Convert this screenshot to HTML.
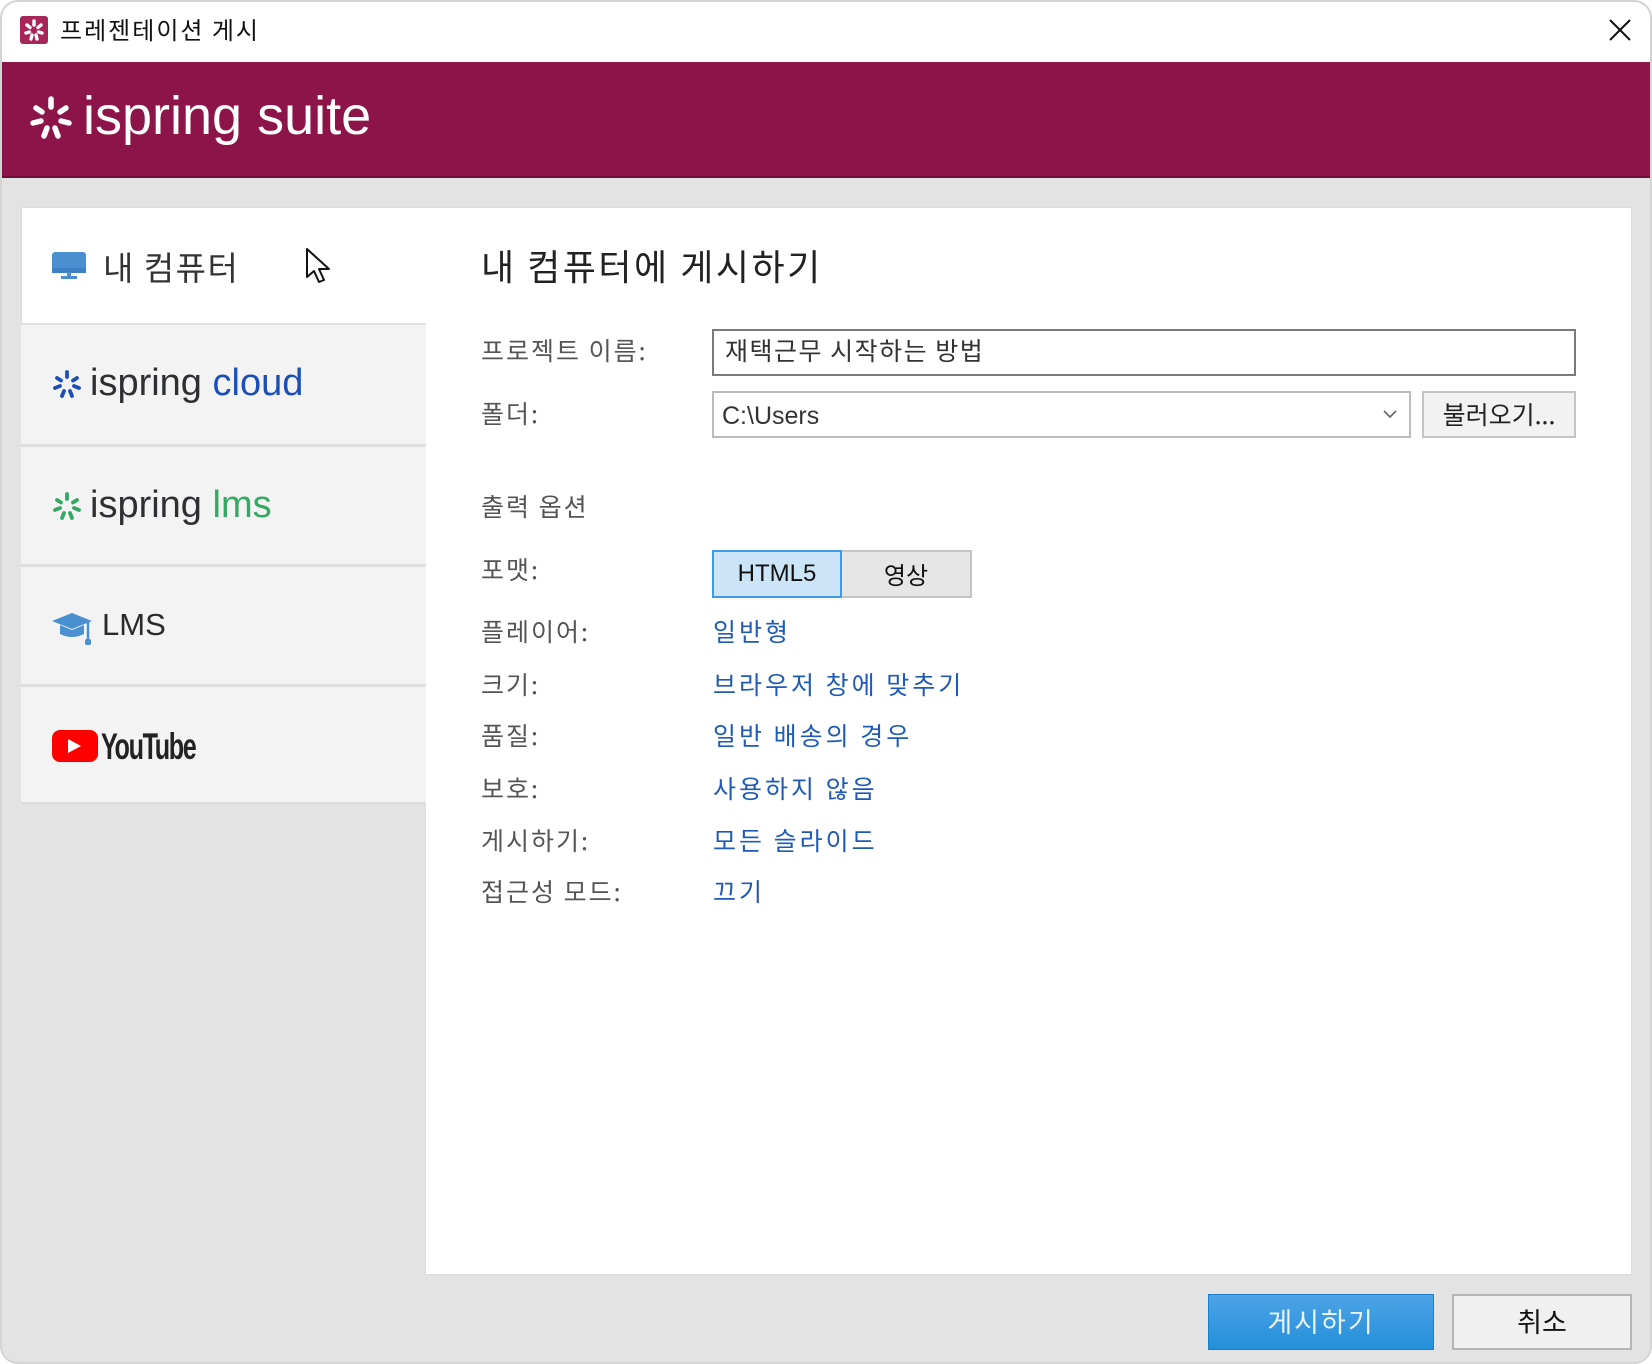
<!DOCTYPE html>
<html><head><meta charset="utf-8"><style>
*{margin:0;padding:0;box-sizing:border-box}
body{width:1652px;height:1364px;background:#fff;font-family:"Liberation Sans","Noto Sans CJK KR",sans-serif;position:relative;overflow:hidden}
.a{position:absolute}
.win{left:0;top:0;width:1652px;height:1364px;background:#e3e3e3;border-radius:18px;overflow:hidden}
.k{font-family:"Noto Sans CJK KR","Liberation Sans",sans-serif}
.lbl{left:481px;font-size:25px;color:#555;line-height:30px;letter-spacing:2px}
.val{left:713px;font-size:25px;color:#1f5bb5;line-height:30px;letter-spacing:3px}
.side{left:21px;width:405px;background:#f3f3f3;border-bottom:3px solid #dedede}
</style></head><body>
<div class="a win">
 <div class="a" style="left:0;top:0;width:1652px;height:62px;background:#fff"></div>
 <div class="a" style="left:20px;top:16px;width:28px;height:28px;background:#a8255a;border-radius:3px"></div>
 <svg class="a" style="left:20px;top:16px" width="28" height="28" viewBox="-14 -14 28 28"><g stroke="#fff" stroke-width="3.4" stroke-linecap="round"><line x1="0" y1="-9" x2="0" y2="-5"/><line x1="7" y1="-5" x2="4" y2="-2.5"/><line x1="8" y1="3" x2="4.5" y2="2"/><line x1="3" y1="9" x2="2" y2="5"/><line x1="-3" y1="9" x2="-2" y2="5"/><line x1="-8" y1="3" x2="-4.5" y2="2"/><line x1="-7" y1="-5" x2="-4" y2="-2.5"/></g></svg>
 <div class="a k" style="left:60px;top:13px;font-size:24px;color:#111;line-height:32px;letter-spacing:2px">프레젠테이션 게시</div>
 <svg class="a" style="left:1609px;top:19px" width="22" height="22"><path d="M1 1L21 21M21 1L1 21" stroke="#111" stroke-width="2"/></svg>
 <div class="a" style="left:0;top:62px;width:1652px;height:116px;background:#8d1448;border-bottom:2px solid #6e0f38"></div>
 <svg class="a" style="left:28px;top:95px" width="46" height="46" viewBox="-23 -23 46 46"><g stroke="#fff" stroke-width="5.5" stroke-linecap="round"><line x1="0" y1="-19" x2="0" y2="-11"/><line x1="15" y1="-10" x2="9" y2="-6"/><line x1="18" y1="5" x2="10" y2="3"/><line x1="7" y1="18" x2="4" y2="10"/><line x1="-7" y1="18" x2="-4" y2="10"/><line x1="-18" y1="5" x2="-10" y2="3"/><line x1="-15" y1="-10" x2="-9" y2="-6"/></g></svg>
 <div class="a" style="left:83px;top:83px;font-size:54px;color:#fff;line-height:66px">ispring suite</div>

 <div class="a" style="left:21px;top:207px;width:1611px;height:1068px;background:#fff;border:1px solid #dcdcdc"></div>
 <div class="a" style="left:21px;top:805px;width:405px;height:472px;background:#e3e3e3"></div>
 <div class="a" style="left:424px;top:325px;width:2px;height:952px;background:#e0e0e0"></div>
 <div class="a" style="left:21px;top:323px;width:405px;height:2px;background:#e0e0e0"></div>
 <div class="a side" style="top:325px;height:122px"></div>
 <div class="a side" style="top:447px;height:120px"></div>
 <div class="a side" style="top:567px;height:120px"></div>
 <div class="a side" style="top:687px;height:118px"></div>

 <svg class="a" style="left:52px;top:250px" width="36" height="32"><rect x="0" y="2" width="34" height="21" rx="3" fill="#4a8fd0"/><rect x="0" y="18" width="34" height="5" fill="#3d80c4"/><rect x="9" y="26" width="16" height="3" fill="#4a8fd0"/><rect x="15" y="22" width="4" height="5" fill="#4a8fd0"/></svg>
 <div class="a k" style="left:103px;top:244px;font-size:33px;color:#333;line-height:44px;letter-spacing:1.5px">내 컴퓨터</div>
 <svg class="a" style="left:305px;top:247px" width="30" height="40"><path d="M2 2L2 30L9 24L14 35L19 33L14 22L24 22Z" fill="#fff" stroke="#111" stroke-width="2" stroke-linejoin="round"/></svg>

 <svg class="a" style="left:52px;top:369px" width="30" height="30" viewBox="-15 -15 30 30"><g stroke="#1c4fb5" stroke-width="3.8" stroke-linecap="round"><line x1="0" y1="-12" x2="0" y2="-7"/><line x1="10" y1="-6" x2="6" y2="-3.5"/><line x1="12" y1="4" x2="7" y2="2"/><line x1="5" y1="12" x2="3" y2="7"/><line x1="-5" y1="12" x2="-3" y2="7"/><line x1="-12" y1="4" x2="-7" y2="2"/><line x1="-10" y1="-6" x2="-6" y2="-3.5"/></g></svg>
 <div class="a" style="left:90px;top:361px;font-size:38px;line-height:44px;color:#2d2f33">ispring <span style="color:#1c4fb5">cloud</span></div>

 <svg class="a" style="left:52px;top:491px" width="30" height="30" viewBox="-15 -15 30 30"><g stroke="#35a863" stroke-width="3.8" stroke-linecap="round"><line x1="0" y1="-12" x2="0" y2="-7"/><line x1="10" y1="-6" x2="6" y2="-3.5"/><line x1="12" y1="4" x2="7" y2="2"/><line x1="5" y1="12" x2="3" y2="7"/><line x1="-5" y1="12" x2="-3" y2="7"/><line x1="-12" y1="4" x2="-7" y2="2"/><line x1="-10" y1="-6" x2="-6" y2="-3.5"/></g></svg>
 <div class="a" style="left:90px;top:483px;font-size:38px;line-height:44px;color:#2d2f33">ispring <span style="color:#35a863">lms</span></div>

 <svg class="a" style="left:52px;top:612px" width="42" height="36"><path d="M0 9L20 1L40 9L20 17Z" fill="#4a8fd0"/><path d="M8 13L8 22Q20 28 32 22L32 13L20 18Z" fill="#4a8fd0"/><line x1="36" y1="10" x2="36" y2="28" stroke="#4a8fd0" stroke-width="2.5"/><rect x="33" y="27" width="6" height="6" rx="2" fill="#4a8fd0"/></svg>
 <div class="a" style="left:102px;top:605px;font-size:31px;line-height:40px;color:#2a2a2a">LMS</div>

 <div class="a" style="left:52px;top:730px;width:46px;height:32px;background:#f00;border-radius:8px"></div>
 <svg class="a" style="left:67px;top:738px" width="16" height="16"><path d="M1 1L14 8L1 15Z" fill="#fff"/></svg>
 <div class="a" style="left:101px;top:726px;font-size:37px;line-height:42px;color:#222;font-weight:bold;letter-spacing:-2px;transform:scaleX(0.68);transform-origin:left top">YouTube</div>

 <div class="a k" style="left:481px;top:242px;font-size:36px;line-height:46px;color:#222;letter-spacing:2.5px">내 컴퓨터에 게시하기</div>

 <div class="a lbl k" style="top:335px">프로젝트 이름:</div>
 <div class="a" style="left:712px;top:329px;width:864px;height:47px;border:2px solid #7a7a7a;background:#fff"></div>
 <div class="a k" style="left:725px;top:334px;font-size:25px;line-height:32px;color:#333;letter-spacing:1.5px">재택근무 시작하는 방법</div>

 <div class="a lbl k" style="top:398px">폴더:</div>
 <div class="a" style="left:712px;top:391px;width:699px;height:47px;border:2px solid #bbb;background:#fff"></div>
 <div class="a" style="left:722px;top:400px;font-size:25px;line-height:32px;color:#333">C:\Users</div>
 <svg class="a" style="left:1382px;top:408px" width="16" height="12"><path d="M2 3L8 9L14 3" stroke="#666" stroke-width="1.6" fill="none"/></svg>
 <div class="a k" style="left:1422px;top:391px;width:154px;height:47px;border:2px solid #c4c4c4;background:#f2f2f2;font-size:25px;line-height:42px;text-align:center;color:#222">불러오기...</div>

 <div class="a lbl k" style="top:491px">출력 옵션</div>
 <div class="a lbl k" style="top:554px">포맷:</div>
 <div class="a" style="left:712px;top:550px;width:130px;height:48px;border:2px solid #3d9ae8;background:#cce4f7;font-size:24px;line-height:44px;text-align:center;color:#111">HTML5</div>
 <div class="a k" style="left:842px;top:550px;width:130px;height:48px;border:2px solid #c4c4c4;border-left:none;background:#e6e6e6;font-size:24px;line-height:44px;text-align:center;color:#111">영상</div>

 <div class="a lbl k" style="top:616px">플레이어:</div><div class="a val k" style="top:616px">일반형</div>
 <div class="a lbl k" style="top:669px">크기:</div><div class="a val k" style="top:669px">브라우저 창에 맞추기</div>
 <div class="a lbl k" style="top:720px">품질:</div><div class="a val k" style="top:720px">일반 배송의 경우</div>
 <div class="a lbl k" style="top:773px">보호:</div><div class="a val k" style="top:773px">사용하지 않음</div>
 <div class="a lbl k" style="top:825px">게시하기:</div><div class="a val k" style="top:825px">모든 슬라이드</div>
 <div class="a lbl k" style="top:876px">접근성 모드:</div><div class="a val k" style="top:876px">끄기</div>

 <div class="a k" style="left:1208px;top:1294px;width:226px;height:56px;background:linear-gradient(#4ea3e6,#2290da);border:1px solid #1a7fc8;color:#e8f3fc;font-size:27px;line-height:52px;text-align:center;letter-spacing:2px">게시하기</div>
 <div class="a k" style="left:1452px;top:1294px;width:180px;height:56px;background:#f0f0f0;border:2px solid #b5b5b5;color:#111;font-size:27px;line-height:50px;text-align:center">취소</div>
</div>
<div class="a" style="left:0;top:0;width:1652px;height:1364px;border:2px solid #d4d4d4;border-radius:18px;pointer-events:none"></div>
</body></html>
